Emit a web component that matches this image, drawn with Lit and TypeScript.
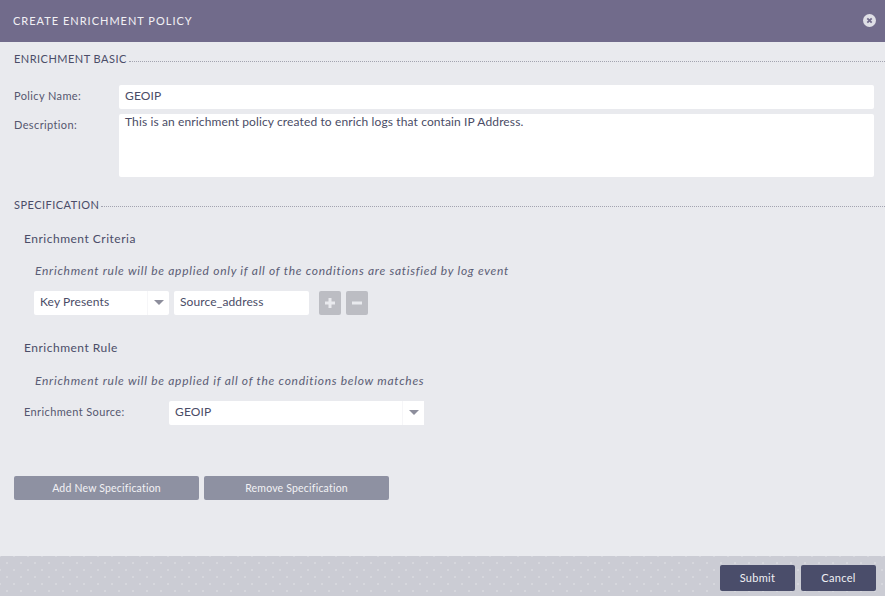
import { LitElement, html, css } from "lit";
import { customElement } from "lit/decorators.js";

@customElement("app-root")
export class AppRoot extends LitElement {
  static styles = css`
    :host { display: flex; flex-direction: column; width: 885px; height: 596px; overflow: hidden; background: #e9eaee; font-family: "Lato", sans-serif; font-size: 11px; color: #4d4f69; }
    .hdr { height: 42px; flex: none; box-sizing: border-box; background: #716b8b; display: flex; align-items: center; justify-content: space-between; padding: 0 9px 2px 13px; color: #f1f1f5; font-size: 11px; letter-spacing: 1px; }
    .close { width: 13px; height: 13px; display: block; }
    .main { flex: 1; display: flex; flex-direction: column; padding-left: 14px; }
    .section { display: flex; align-items: center; gap: 2px; height: 14px; font-size: 11px; letter-spacing: 0.47px; color: #4b4d68; }
    .section i { flex: 1; border-top: 1px dotted #a3a4b0; height: 0; margin-top: 5px; }
    .s1 { margin-top: 9px; }
    .s1 i { margin-top: 7px; }
    .row { display: flex; align-items: flex-start; }
    .lbl { width: 105px; flex: none; color: #55576f; font-size: 11px; letter-spacing: 0.38px; }
    .name { margin-top: 20px; }
    .name .lbl { line-height: 22px; }
    .field { background: #fff; border-radius: 2px; color: #4a4c66; font-size: 12px; letter-spacing: 0.12px; }
    .name .field { width: 755px; height: 24px; line-height: 22px; padding-left: 6px; box-sizing: border-box; }
    .desc { margin-top: 5px; }
    .desc .lbl { line-height: 22px; }
    .desc .field { width: 755px; height: 63px; padding: 0 6px; box-sizing: border-box; line-height: 15px; }
    .s2 { margin-top: 20px; }
    .spec { padding-left: 10px; display: flex; flex-direction: column; }
    h3 { margin: 0; font-weight: 400; font-size: 12px; letter-spacing: 0.5px; color: #4b4d68; line-height: 16px; }
    .crit { margin-top: 20px; }
    .note { font-style: italic; font-size: 12px; letter-spacing: 0.72px; color: #5b5d75; padding-left: 11px; line-height: 16px; }
    .n1 { margin-top: 16px; }
    .n2 { margin-top: 17px; }
    .conds { display: flex; align-items: center; margin: 12px 0 0 10px; }
    .select { display: flex; align-items: center; justify-content: space-between; height: 24px; box-sizing: border-box; padding-left: 6px; line-height: 22px; }
    .select span:first-child { align-self: flex-start; }
    .arrow { width: 22px; height: 24px; display: flex; align-items: center; justify-content: center; border-left: 1px solid #f6f6f8; box-sizing: border-box; flex: none; }
    .arrow svg { width: 10px; height: 5px; display: block; margin-bottom: 2px; }
    .sel1 { width: 135px; }
    .txt { width: 135px; height: 24px; line-height: 22px; padding-left: 6px; box-sizing: border-box; margin-left: 5px; }
    .ic { width: 22px; height: 24px; background: #bcbdc3; border-radius: 2px; display: flex; align-items: center; justify-content: center; }
    .ic svg { width: 12px; height: 12px; display: block; }
    .plus { margin-left: 10px; }
    .minus { margin-left: 5px; }
    .rule { margin-top: 25px; }
    .src { margin-top: 12px; display: flex; align-items: flex-start; }
    .src .lbl { width: 145px; line-height: 22px; }
    .sel2 { width: 255px; border-radius: 2px 0 0 2px; }
    .btns { display: flex; gap: 5px; margin-top: 51px; }
    .btn { width: 185px; height: 24px; background: #8e91a2; color: #f2f2f5; border-radius: 2px; text-align: center; line-height: 24px; font-size: 10.5px; letter-spacing: 0.2px; }
    .ftr { height: 40px; flex: none; background-color: #cbccd4; background-image: radial-gradient(circle, #d6d7dd 0.7px, transparent 1px), radial-gradient(circle, #d6d7dd 0.7px, transparent 1px); background-size: 14px 14px; background-position: 0 0, 7px 7px; display: flex; align-items: center; justify-content: flex-end; gap: 6px; padding-right: 9px; box-sizing: border-box; padding-top: 4px; }
    .fb { width: 75px; height: 26px; background: #4a4d6a; color: #f0f0f4; border-radius: 2px; text-align: center; line-height: 26px; font-size: 11px; letter-spacing: 0.3px; }
  `;

  private arrow() {
    return html`<span class="arrow"><svg viewBox="0 0 10 5"><path d="M0 0H10L5 5Z" fill="#8d8e9c"></path></svg></span>`;
  }

  render() {
    return html`
      <div class="hdr">
        <span>CREATE ENRICHMENT POLICY</span>
        <svg class="close" viewBox="0 0 13 13"><circle cx="6.5" cy="6.5" r="6.5" fill="#dfdfe6"></circle><path d="M4.3 4.3L8.7 8.7M8.7 4.3L4.3 8.7" stroke="#716b8b" stroke-width="1.8"></path></svg>
      </div>
      <div class="main">
        <div class="section s1"><span>ENRICHMENT BASIC</span><i></i></div>
        <div class="row name"><span class="lbl">Policy Name:</span><div class="field">GEOIP</div></div>
        <div class="row desc"><span class="lbl">Description:</span><div class="field">This is an enrichment policy created to enrich logs that contain IP Address.</div></div>
        <div class="section s2"><span>SPECIFICATION</span><i></i></div>
        <div class="spec">
          <h3 class="crit">Enrichment Criteria</h3>
          <div class="note n1">Enrichment rule will be applied only if all of the conditions are satisfied by log event</div>
          <div class="conds">
            <div class="field select sel1"><span>Key Presents</span>${this.arrow()}</div>
            <div class="field txt">Source_address</div>
            <div class="ic plus"><svg viewBox="0 0 12 12"><path d="M6 1V11M1 6H11" stroke="#e9eaee" stroke-width="3"></path></svg></div>
            <div class="ic minus"><svg viewBox="0 0 12 12"><path d="M1 6H11" stroke="#e9eaee" stroke-width="3"></path></svg></div>
          </div>
          <h3 class="rule">Enrichment Rule</h3>
          <div class="note n2">Enrichment rule will be applied if all of the conditions below matches</div>
          <div class="src"><span class="lbl">Enrichment Source:</span><div class="field select sel2"><span>GEOIP</span>${this.arrow()}</div></div>
        </div>
        <div class="btns"><div class="btn">Add New Specification</div><div class="btn">Remove Specification</div></div>
      </div>
      <div class="ftr"><div class="fb">Submit</div><div class="fb">Cancel</div></div>
    `;
  }
}
